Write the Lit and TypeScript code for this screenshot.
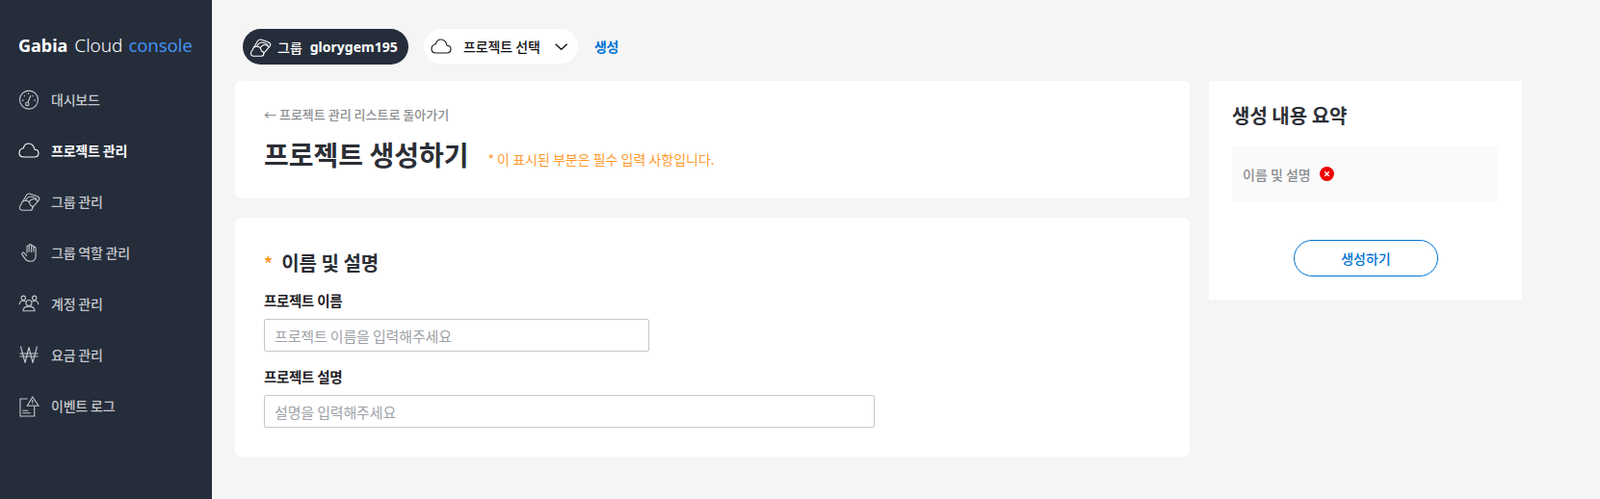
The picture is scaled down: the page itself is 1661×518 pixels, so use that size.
import { LitElement, html, css, svg } from "lit";
import { customElement } from "lit/decorators.js";

const cloud = svg`<path d="M7 19H17.500C20.200 19 22 17.400 22 15C22 12.800 20.300 11.200 18 11.200C17.200 7.500 14.800 5 11.700 5C9 5 7 6.800 6.300 9.800C3.800 10.300 2 12.300 2 15C2 17.400 4 19 7 19z"/>`;
const group = svg`<path d="M6.500 21.300H13c1.500 0 2.800-1.100 2.800-2.600 0-1.400-1-2.500-2.400-2.700-.4-2.700-2.300-4.700-5-4.700-2.300 0-3.900 1.700-4.400 4C3.200 15.800 2.500 17.200 2.500 18.700c0 1.500 1.600 2.600 4 2.600z"/><path d="M5.500 12.500 9.500 5.500c.8-1.300 2.500-1.700 4-1.300l6.500 2.300c2 .8 3 2.200 2.700 3.500-.2.800-.8 1.500-1.500 2.200l-5.700 6.500"/><path d="M8.500 11.300C10 8.500 12 7 14 7c2 0 4.500 1 6.500 3.500"/><path d="M12 13c1.500-2.500 3-3.500 4.800-3.500 1.800 0 3.300 1 4.200 2.500"/>`;
const gauge = svg`<g transform="translate(0 .6)"><circle cx="12" cy="12" r="9.500"/><circle cx="10.300" cy="16.300" r="1.700"/><path d="M11 14.700 13.800 7.700M5 12.500h1.600M7 7.500l1 1M11.500 4.800v1.500M16.500 7.500l-1 1M17.500 12.500h1.500"/></g>`;
const hand = svg`<g transform="translate(1.500 .8)"><path d="M8.500 12V5.300c0-1.500 2.200-1.500 2.200 0V4c0-1.600 2.400-1.600 2.400 0v1.200c0-1.500 2.300-1.500 2.300 0v1.300c0-1.400 2.200-1.400 2.200 0v8.500c0 4-2.400 5.500-5.700 5.500-2.700 0-4.300-1-5.600-2.900l-2.800-4.300c-.8-1.300 1-2.600 2.100-1.500L8.500 15"/><path d="M10.700 5v6M13.100 5v6M15.400 5v6"/></g>`;
const users = svg`<circle cx="12" cy="11.500" r="3"/><path d="M6 19.800c0-3 2.700-4.700 6-4.700s6 1.700 6 4.700z"/><circle cx="6.300" cy="6.300" r="2.200"/><path d="M2.200 13.300c0-2.500 1.600-4 4-4 1 0 1.700.3 2.300.8"/><circle cx="17.700" cy="6.300" r="2.200"/><path d="M21.800 13.300c0-2.500-1.600-4-4-4-1 0-1.700.3-2.300.8"/>`;
const won = svg`<path d="M3.500 3.500 8 20.500 12 4.500l4 16 4.500-17M2.500 11h19M2.500 14h19"/>`;
const eventLog = svg`<path d="M10.500 5H3v18h14.700V12.500"/><path d="M5.300 17.300h6M5.300 19.700h8.400"/><path d="M15.800 3 10.300 12.300H22z"/><path d="M15.800 6v3.300M15.800 10.200v.8"/>`;
const chev = svg`<path d="M.7.700l6 5.600 6-5.600"/>`;

const nav = [
  { label: "대시보드", icon: gauge },
  { label: "프로젝트 관리", icon: cloud, active: true },
  { label: "그룹 관리", icon: group },
  { label: "그룹 역할 관리", icon: hand },
  { label: "계정 관리", icon: users },
  { label: "요금 관리", icon: won },
  { label: "이벤트 로그", icon: eventLog },
];

@customElement("app-root")
export class AppRoot extends LitElement {
  static styles = css`
    :host {
      display: flex;
      min-height: 518px;
      background: #f5f5f5;
      font-family: "Noto Sans CJK KR", "Noto Sans", sans-serif;
      color: #2b2e35;
    }
    svg { fill: none; stroke: currentColor; stroke-width: 1.100; display: block; flex: none; }
    .side {
      width: 220px;
      flex: none;
      background: #252d3b;
      box-sizing: border-box;
      padding: 30px 0 0 19px;
    }
    .logo {
      font-family: "Noto Sans", sans-serif;
      font-size: 19px;
      line-height: 34px;
      color: #fff;
      font-weight: 300;
      white-space: nowrap;
      margin-bottom: 12px;
    }
    .logo b { font-weight: 700; font-size: 18px; margin-right: 2px; }
    .logo span { color: #4391ef; margin-left: 1px; font-size: 18.600px; font-weight: 400; letter-spacing: -0.15px; }
    .nav { display: flex; flex-direction: column; padding-left: 1px; }
    .item {
      display: flex;
      align-items: center;
      height: 53px;
      gap: 11px;
      font-size: 14px;
      font-weight: 500;
      color: #c4c7cc;
      letter-spacing: -0.2px;
    }
    .item svg { width: 24px; height: 24px; margin-left: -2px; color: #c4c7cc; }
    .item.active { color: #fff; font-weight: 700; }
    .item.active svg { color: #fff; }
    .main { flex: 1; min-width: 0; padding: 30px 0 0 24px; }
    .top { display: flex; align-items: flex-start; height: 37px; margin: 0 0 17px 8px; }
    .pill {
      display: flex;
      align-items: center;
      box-sizing: border-box;
      border-radius: 19px;
      font-size: 14px;
      font-weight: 500;
      white-space: nowrap;
    }
    .pill.dark { background: #252d3b; color: #fff; width: 172px; height: 37px; padding-left: 6px; }
    .pill.dark svg { width: 24px; height: 24px; margin-right: 6px; color: #fff; }
    .pill.dark b { margin-left: 8px; font-size: 14px; font-weight: 700; font-family: "Noto Sans", sans-serif; }
    .pill.light { background: #fff; color: #111; width: 160px; height: 36px; margin-left: 16px; padding-left: 6px; letter-spacing: -0.1px; }
    .pill.light .c { width: 24px; height: 24px; margin-right: 11px; color: #111; }
    .pill.light .d { width: 14px; height: 7px; margin-left: 15px; stroke-width: 1.4; color: #111; }
    .create { margin-left: 17px; font-size: 14px; font-weight: 700; color: #0073d1; line-height: 37px; letter-spacing: -0.3px; }
    .content { display: flex; align-items: flex-start; gap: 20px; }
    .left { width: 991px; display: flex; flex-direction: column; gap: 20px; }
    .card { background: #fff; border-radius: 6px; box-sizing: border-box; padding: 0 30px; }
    .head { height: 122px; padding-top: 25px; }
    .back { font-size: 13px; line-height: 20px; color: #8a8c90; font-weight: 500; }
    .titles { display: flex; align-items: flex-end; margin-top: 10px; }
    h1 { margin: 0; font-size: 28px; line-height: 42px; font-weight: 700; color: #2b2e35; }
    .note { margin: 0 0 6px 20px; font-size: 14px; line-height: 20px; color: #ff9a2e; font-weight: 400; }
    .form { height: 248px; padding-top: 32px; }
    h2 { margin: 0; font-size: 20px; line-height: 30px; font-weight: 700; display: flex; align-items: center; }
    h2 i { font-style: normal; color: #ff9a2e; margin-right: 9px; font-size: 18px; }
    label { display: block; font-size: 14.500px; font-weight: 700; line-height: 20px; color: #1e2026; letter-spacing: -0.3px; }
    .l1 { margin-top: 14px; }
    .l2 { margin-top: 16px; }
    .field {
      display: block;
      margin-top: 9px;
      height: 34px;
      box-sizing: border-box;
      border: 1px solid #c8c8c8;
      border-radius: 2px;
      padding: 0 8px 0 10px;
      font: 400 15px "Noto Sans CJK KR", sans-serif;
      letter-spacing: -0.15px;
      color: #2b2e35;
      outline: none;
      background: #fff;
    }
    .field::placeholder { color: #a0a2a8; opacity: 1; }
    .f1 { width: 400px; }
    .f2 { width: 634px; }
    .summary { width: 325px; height: 227px; background: #fff; box-sizing: border-box; padding: 21px 24px 0; }
    .summary h3 { margin: 0; font-size: 20px; line-height: 30px; font-weight: 700; color: #2b2e35; }
    .box {
      display: flex; align-items: center; gap: 9px;
      margin-top: 17px; height: 57px; background: #fafafa;
      padding-left: 11px; font-size: 14px; color: #8a8c90; font-weight: 500; width: 277px; box-sizing: border-box;
    }
    .x { width: 15px; height: 15px; stroke: none; }
    .btn {
      display: block; width: 150px; height: 38px; margin: 40px 0 0 64px;
      border: 1px solid #0073d1; border-radius: 19px; background: #fff;
      color: #0073d1; font: 500 14px "Noto Sans CJK KR", sans-serif; padding: 0;
    }
  `;

  render() {
    return html`
      <aside class="side">
        <div class="logo"><b>Gabia</b> Cloud <span>console</span></div>
        <div class="nav">
          ${nav.map(
            (n) => html`<div class="item ${n.active ? "active" : ""}">
              <svg viewBox="0 0 24 24">${n.icon}</svg>${n.label}
            </div>`
          )}
        </div>
      </aside>
      <main class="main">
        <div class="top">
          <div class="pill dark"><svg viewBox="0 0 24 24">${group}</svg>그룹 <b>glorygem195</b></div>
          <div class="pill light">
            <svg class="c" viewBox="0 0 24 24">${cloud}</svg>프로젝트 선택
            <svg class="d" viewBox="0 0 14 7">${chev}</svg>
          </div>
          <span class="create">생성</span>
        </div>
        <div class="content">
          <div class="left">
            <section class="card head">
              <div class="back">← 프로젝트 관리 리스트로 돌아가기</div>
              <div class="titles">
                <h1>프로젝트 생성하기</h1>
                <span class="note">* 이 표시된 부분은 필수 입력 사항입니다.</span>
              </div>
            </section>
            <section class="card form">
              <h2><i>*</i>이름 및 설명</h2>
              <label class="l1">프로젝트 이름</label>
              <input class="field f1" placeholder="프로젝트 이름을 입력해주세요" />
              <label class="l2">프로젝트 설명</label>
              <input class="field f2" placeholder="설명을 입력해주세요" />
            </section>
          </div>
          <aside class="summary">
            <h3>생성 내용 요약</h3>
            <div class="box">
              이름 및 설명
              <svg class="x" viewBox="0 0 15 15">
                <circle cx="7.500" cy="7.500" r="7.500" fill="#f00000"></circle>
                <path d="M5.300 5.300l4.400 4.400M9.700 5.300l-4.400 4.400" stroke="#fff" stroke-width="1.500"></path>
              </svg>
            </div>
            <button class="btn">생성하기</button>
          </aside>
        </div>
      </main>
    `;
  }
}
